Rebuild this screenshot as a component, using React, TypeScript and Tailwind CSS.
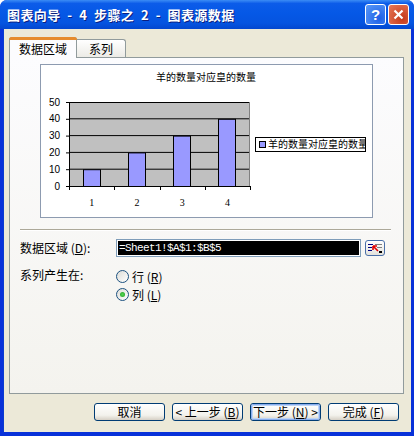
import React from "react";

const FONT = { fontFamily: '"Noto Sans CJK SC", "Liberation Sans", sans-serif' };

export default function App() {
  return (
    <div
      className="w-[414px] h-[436px] flex flex-col bg-[#0831d9] rounded-t-[7px] overflow-hidden text-[12px] text-black"
      style={FONT}
    >
      <TitleBar />

      {/* window body */}
      <div className="flex-1 flex flex-col bg-[#ece9d8] ml-[3px] mr-[3px] mb-[4px] border-l border-[#0b3bd0]">
        {/* tabs */}
        <div className="flex items-end ml-[5px] mt-[8px] h-[20px]">
          <div className="relative z-10 w-[68px] h-[21px] -mb-[1px] bg-[#fcfcfe] border border-b-0 border-[#919b9c] rounded-t-[3px] flex items-center justify-center pt-[2px]">
            <div className="absolute left-[-1px] right-[-1px] top-[-1px] h-[3px] rounded-t-[3px] bg-[#e68b2c] border-t border-[#e68b2c]" />
            <span className="text-[12px] leading-none">数据区域</span>
          </div>
          <div className="w-[49px] h-[18px] bg-[linear-gradient(#ffffff,#ecebe6)] border border-b-0 border-l-0 border-[#919b9c] rounded-tr-[3px] flex items-center justify-center">
            <span className="text-[12px] leading-none">系列</span>
          </div>
        </div>

        {/* tab page */}
        <div className="ml-[5px] w-[395px] h-[337px] border border-[#919b9c] bg-[linear-gradient(#fcfcfe,#f4f3ee)] flex flex-col">
          <div className="ml-[30px] mt-[6px] w-[333px] h-[154px] bg-white border border-[#8d9bb0]">
            <Chart />
          </div>

          {/* separator */}
          <div className="ml-[10px] mt-[11px] w-[371px] border-t border-[#aca899] border-b border-b-white" />

          {/* range row */}
          <div className="flex items-center mt-[8px] ml-[10px] h-[18px]">
            <span className="w-[96px] leading-none">
              数据区域 (<span className="underline">D</span>):
            </span>
            <div className="w-[245px] h-[18px] border border-[#7f9db9] bg-white p-[1px]">
              <div
                className="h-full bg-black text-white text-[11px] tracking-[-0.6px] leading-[14px] pl-[1px]"
                style={{ fontFamily: '"Liberation Mono", monospace' }}
              >
                =Sheet1!$A$1:$B$5
              </div>
            </div>
            <RefButton />
          </div>

          {/* series row */}
          <div className="flex mt-[11px] ml-[10px]">
            <span className="w-[96px] leading-[14px]">系列产生在:</span>
            <div className="flex flex-col gap-[5px] pt-[2px]">
              <Radio label="行" hot="R" />
              <Radio label="列" hot="L" checked />
            </div>
          </div>
        </div>

        {/* buttons */}
        <div className="flex justify-end gap-[7px] mt-[9px] pr-[12px]">
          <XpButton>取消</XpButton>
          <XpButton>
            &lt; 上一步 (<span className="underline">B</span>)
          </XpButton>
          <XpButton focused>
            下一步 (<span className="underline">N</span>) &gt;
          </XpButton>
          <XpButton>
            完成 (<span className="underline">F</span>)
          </XpButton>
        </div>
      </div>
    </div>
  );
}

function TitleBar() {
  return (
    <div className="h-[29px] flex items-center pl-[7px] pr-[5px] bg-[linear-gradient(to_bottom,#3b8cf5_0%,#0c5ce9_12%,#0558e6_45%,#0554e0_80%,#0347cf_100%)]">
      <span className="flex-1 text-white font-bold text-[13px] whitespace-pre tracking-[0.4px] [text-shadow:1px_1px_0_#0a1e80]">
        图表向导  -  4  步骤之  2  -  图表源数据
      </span>
      <div className="flex gap-[2px]">
        <div className="w-[21px] h-[21px] rounded-[3px] border border-white bg-[radial-gradient(circle_at_70%_70%,#1d5fe6,#5b9af8)] flex items-center justify-center text-white font-bold text-[15px] leading-none" style={{ fontFamily: '"Liberation Sans", sans-serif' }}>
          ?
        </div>
        <div className="w-[21px] h-[21px] rounded-[3px] border border-white bg-[radial-gradient(circle_at_70%_70%,#c4391a,#e87a5a)] flex items-center justify-center">
          <svg width="11" height="11" viewBox="0 0 11 11">
            <path d="M1.5 1.5 L9.5 9.5 M9.5 1.5 L1.5 9.5" stroke="white" strokeWidth="2.2" />
          </svg>
        </div>
      </div>
    </div>
  );
}

function Chart() {
  const plotX = 28;
  const plotY = 37;
  const plotW = 181;
  const plotH = 84;
  const unit = plotH / 50;
  const cat = plotW / 4;
  const values = [10, 20, 30, 40];
  const f = '"Noto Sans CJK SC", sans-serif';

  return (
    <svg width="331" height="152" viewBox="0 0 331 152">
      <text x="165" y="16" textAnchor="middle" fontSize="10" fontFamily={f}>
        羊的数量对应皇的数量
      </text>

      <rect x={plotX} y={plotY} width={plotW} height={plotH} fill="#c0c0c0" />
      {[1, 2, 3, 4].map((k) => (
        <line key={k} x1={plotX} x2={plotX + plotW} y1={plotY + plotH - k * 10 * unit} y2={plotY + plotH - k * 10 * unit} stroke="#000" strokeWidth="1" />
      ))}
      <line x1={plotX} x2={plotX + plotW} y1={plotY + 0.5} y2={plotY + 0.5} stroke="#000" />
      <line x1={plotX + plotW - 0.5} x2={plotX + plotW - 0.5} y1={plotY} y2={plotY + plotH} stroke="#808080" />

      {values.map((v, i) => {
        const cx = plotX + (i + 0.5) * cat;
        const h = v * unit;
        return (
          <rect key={i} x={Math.round(cx - 9) + 0.5} y={plotY + plotH - h + 0.5} width="17" height={h} fill="#9999ff" stroke="#000" strokeWidth="1" />
        );
      })}

      {/* axes */}
      <line x1={plotX + 0.5} x2={plotX + 0.5} y1={plotY} y2={plotY + plotH + 1} stroke="#000" />
      <line x1={plotX} x2={plotX + plotW} y1={plotY + plotH + 0.5} y2={plotY + plotH + 0.5} stroke="#000" />
      {[0, 1, 2, 3, 4].map((k) => (
        <line key={k} x1={Math.round(plotX + k * cat) + 0.5} x2={Math.round(plotX + k * cat) + 0.5} y1={plotY + plotH} y2={plotY + plotH + 4} stroke="#000" />
      ))}
      {[0, 1, 2, 3, 4, 5].map((k) => (
        <line key={k} x1={plotX - 3} x2={plotX} y1={plotY + plotH - k * 10 * unit + 0.5} y2={plotY + plotH - k * 10 * unit + 0.5} stroke="#000" />
      ))}

      {[0, 10, 20, 30, 40, 50].map((n, k) => (
        <text key={n} x="19" y={plotY + plotH - k * 10 * unit + 3.5} textAnchor="end" fontSize="10" fontFamily='"Liberation Sans", sans-serif'>
          {n}
        </text>
      ))}
      {values.map((_, i) => (
        <text key={i} x={plotX + (i + 0.5) * cat} y="141" textAnchor="middle" fontSize="10" fontFamily='"Liberation Serif", serif'>
          {i + 1}
        </text>
      ))}

      {/* legend */}
      <rect x="214.5" y="72.5" width="110" height="14" fill="white" stroke="#000" />
      <rect x="218.5" y="76.5" width="6" height="6" fill="#9999ff" stroke="#000" />
      <svg x="214" y="72" width="110" height="14">
        <text x="13" y="11" fontSize="10" fontFamily={f}>
          羊的数量对应皇的数量
        </text>
      </svg>
    </svg>
  );
}

function RefButton() {
  return (
    <div className="ml-[4px] w-[20px] h-[16px] rounded-[3px] border border-[#4a6fa8] bg-[linear-gradient(#ffffff,#e3e2dc)] flex items-center justify-center">
      <svg width="14" height="10" viewBox="0 0 14 10">
        <rect x="0" y="1" width="5" height="1" fill="#000080" />
        <rect x="0" y="4" width="4" height="1" fill="#000080" />
        <rect x="0" y="7" width="4" height="1" fill="#000080" />
        <rect x="7" y="1" width="7" height="1" fill="#808080" />
        <rect x="9" y="4" width="5" height="1" fill="#808080" />
        <rect x="11" y="8" width="3" height="2" fill="#000" />
        <path d="M5 3 L10 8 M5 3 L5 7 M5 3 L9 3" stroke="#e00000" strokeWidth="1.6" fill="none" />
      </svg>
    </div>
  );
}

function Radio({ label, hot, checked }: { label: string; hot: string; checked?: boolean }) {
  return (
    <div className="flex items-center gap-[3px] h-[13px]">
      <div className="w-[13px] h-[13px] rounded-full border border-[#1c5180] bg-[linear-gradient(135deg,#dcdcd7,#ffffff)] flex items-center justify-center">
        {checked && <div className="w-[5px] h-[5px] rounded-full bg-[radial-gradient(circle,#55d455,#21a121)]" />}
      </div>
      <span className="leading-none">
        {label} (<span className="underline">{hot}</span>)
      </span>
    </div>
  );
}

function XpButton({ children, focused }: { children: React.ReactNode; focused?: boolean }) {
  return (
    <div className="w-[71px] h-[18px] rounded-[3px] border border-[#003c74] bg-[linear-gradient(#ffffff,#f3f2ec_70%,#d6d0c5)] flex items-center justify-center">
      <div className={`w-full h-full rounded-[2px] flex items-center justify-center leading-none ${focused ? "border border-[#89adee] shadow-[inset_0_0_0_1px_#bcd4f6]" : ""}`}>
        <span className="whitespace-pre">{children}</span>
      </div>
    </div>
  );
}
